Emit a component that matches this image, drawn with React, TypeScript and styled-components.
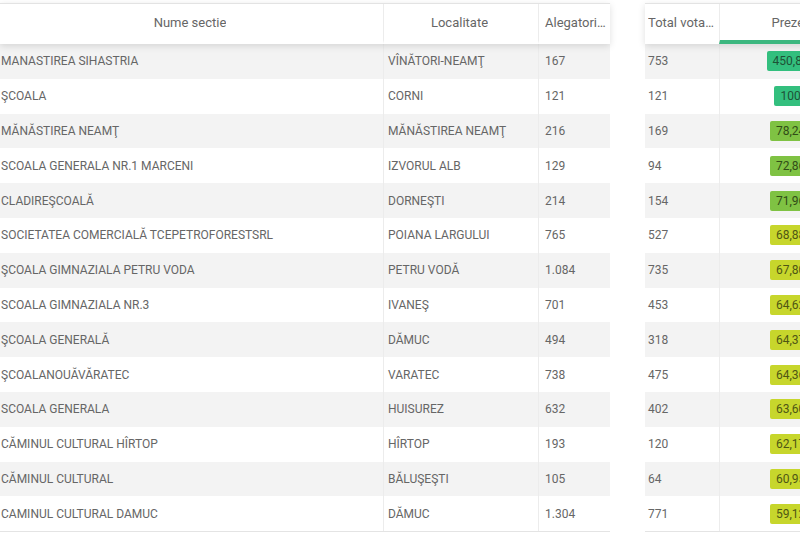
import styled, { createGlobalStyle } from "styled-components";

const GlobalStyle = createGlobalStyle`
  body {
    margin: 0;
    background: #ffffff;
    font-family: Roboto, "Liberation Sans", Arial, sans-serif;
    overflow: hidden;
  }
`;

const Page = styled.div`
  display: flex;
  align-items: flex-start;
  gap: 35px;
  padding-top: 3px;
  width: 800px;
  height: 534px;
  overflow: hidden;
  background: #ffffff;
`;

const Table = styled.div<{ $width: number }>`
  display: flex;
  flex-direction: column;
  flex: 0 0 ${(p) => p.$width}px;
  width: ${(p) => p.$width}px;
`;

const HeadRow = styled.div<{ $cols: string }>`
  display: grid;
  grid-template-columns: ${(p) => p.$cols};
  height: 40px;
  border-top: 1px solid #e3e3e3;
  background: #ffffff;
  position: relative;
  z-index: 1;
  box-shadow: 0 2px 7px rgba(0, 0, 0, 0.13);
`;

const HeadCell = styled.div<{ $align?: "left" | "center"; $pad?: number; $divider?: boolean; $sorted?: boolean }>`
  display: flex;
  align-items: center;
  justify-content: ${(p) => (p.$align === "left" ? "flex-start" : "center")};
  padding: 0 3px 0 ${(p) => p.$pad ?? 0}px;
  border-left: ${(p) => (p.$divider ? "1px solid #ececec" : "none")};
  border-bottom: ${(p) => (p.$sorted ? "4px solid #3cb77f" : "4px solid transparent")};
  font-size: 13px;
  color: #666666;
  min-width: 0;

  span {
    white-space: nowrap;
    overflow: hidden;
    text-overflow: ellipsis;
  }
`;

const Row = styled.div<{ $cols: string; $odd: boolean; $last?: boolean }>`
  display: grid;
  grid-template-columns: ${(p) => p.$cols};
  height: 34.8px;
  background: ${(p) => (p.$odd ? "#f3f3f3" : "#ffffff")};
  border-bottom: ${(p) => (p.$last ? "1px solid #e4e4e4" : "none")};
`;

const Cell = styled.div<{ $pad?: number; $divider?: boolean; $center?: boolean }>`
  display: flex;
  align-items: center;
  justify-content: ${(p) => (p.$center ? "center" : "flex-start")};
  padding-left: ${(p) => p.$pad ?? 0}px;
  padding-right: ${(p) => (p.$center ? 7 : 0)}px;
  border-left: ${(p) => (p.$divider ? "1px solid #ececec" : "none")};
  font-size: 12px;
  color: #666666;
  white-space: nowrap;
  overflow: hidden;
`;

type Level = "high" | "mid" | "low";

const badgeColors: Record<Level, { bg: string; fg: string }> = {
  high: { bg: "#33bf7e", fg: "#1e5236" },
  mid: { bg: "#7fc243", fg: "#314d17" },
  low: { bg: "#c7d62c", fg: "#4f5614" },
};

const Badge = styled.span<{ $level: Level }>`
  display: inline-flex;
  align-items: center;
  height: 20px;
  padding: 0 6px;
  border-radius: 2px;
  font-size: 12px;
  background: ${(p) => badgeColors[p.$level].bg};
  color: ${(p) => badgeColors[p.$level].fg};
`;

const LEFT_COLS = "383px 155px 72px";
const RIGHT_COLS = "74px 158px";

const rows = [
  ["MANASTIREA SIHASTRIA", "VÎNĂTORI-NEAMŢ", 167, 753],
  ["ŞCOALA", "CORNI", 121, 121],
  ["MĂNĂSTIREA NEAMŢ", "MĂNĂSTIREA NEAMŢ", 216, 169],
  ["SCOALA GENERALA NR.1 MARCENI", "IZVORUL ALB", 129, 94],
  ["CLADIREŞCOALĂ", "DORNEŞTI", 214, 154],
  ["SOCIETATEA COMERCIALĂ TCEPETROFORESTSRL", "POIANA LARGULUI", 765, 527],
  ["ŞCOALA GIMNAZIALA PETRU VODA", "PETRU VODĂ", 1084, 735],
  ["SCOALA GIMNAZIALA NR.3", "IVANEŞ", 701, 453],
  ["ŞCOALA GENERALĂ", "DĂMUC", 494, 318],
  ["ŞCOALANOUĂVĂRATEC", "VARATEC", 738, 475],
  ["SCOALA GENERALA", "HUISUREZ", 632, 402],
  ["CĂMINUL CULTURAL HÎRTOP", "HÎRTOP", 193, 120],
  ["CĂMINUL CULTURAL", "BĂLUŞEŞTI", 105, 64],
  ["CAMINUL CULTURAL DAMUC", "DĂMUC", 1304, 771],
] as const;

const fmtInt = (n: number) => n.toLocaleString("de-DE");

const fmtPct = (voted: number, total: number) => {
  const v = Math.floor((voted / total) * 10000) / 100;
  if (Number.isInteger(v)) return `${v}%`;
  return `${v.toFixed(2).replace(".", ",")}%`;
};

const levelOf = (pct: number): Level => (pct >= 80 ? "high" : pct >= 70 ? "mid" : "low");

export default function App() {
  return (
    <>
      <GlobalStyle />
      <Page>
        <Table $width={610}>
          <HeadRow $cols={LEFT_COLS}>
            <HeadCell>
              <span>Nume sectie</span>
            </HeadCell>
            <HeadCell $divider>
              <span>Localitate</span>
            </HeadCell>
            <HeadCell $divider $align="left" $pad={6}>
              <span>Alegatori pe liste</span>
            </HeadCell>
          </HeadRow>
          {rows.map(([name, place, voters], i) => (
            <Row key={i} $cols={LEFT_COLS} $odd={i % 2 === 0} $last={i === rows.length - 1}>
              <Cell $pad={1}>{name}</Cell>
              <Cell $divider $pad={4}>
                {place}
              </Cell>
              <Cell $divider $pad={6}>
                {fmtInt(voters)}
              </Cell>
            </Row>
          ))}
        </Table>

        <Table $width={232}>
          <HeadRow $cols={RIGHT_COLS}>
            <HeadCell $align="left" $pad={3}>
              <span>Total votanti</span>
            </HeadCell>
            <HeadCell $divider $sorted>
              <span>Prezenta</span>
            </HeadCell>
          </HeadRow>
          {rows.map(([, , voters, voted], i) => {
            const pct = (voted / voters) * 100;
            return (
              <Row key={i} $cols={RIGHT_COLS} $odd={i % 2 === 0} $last={i === rows.length - 1}>
                <Cell $pad={3}>{voted}</Cell>
                <Cell $divider $center>
                  <Badge $level={levelOf(pct)}>{fmtPct(voted, voters)}</Badge>
                </Cell>
              </Row>
            );
          })}
        </Table>
      </Page>
    </>
  );
}
